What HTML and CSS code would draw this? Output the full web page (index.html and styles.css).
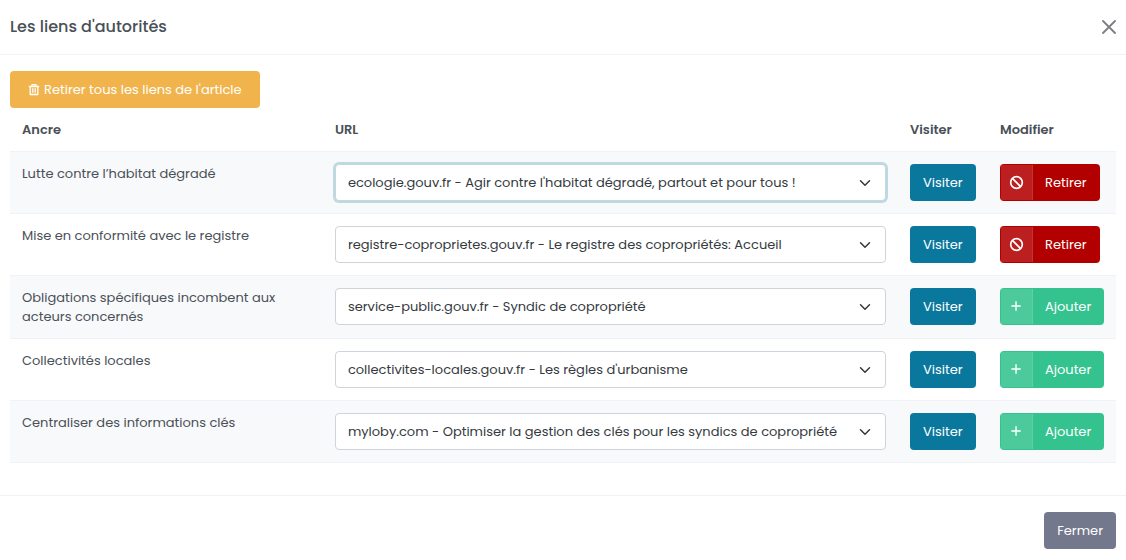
FILE: index.html
```html
<!DOCTYPE html>
<html lang="fr">
<head>
  <meta charset="UTF-8">
  <meta name="viewport" content="width=device-width, initial-scale=1.0">
  <title>Les liens d'autorités</title>
  <link rel="stylesheet" href="styles.css">
</head>
<body>
  <svg class="sprite" aria-hidden="true">
    <symbol id="icon-ban" viewBox="0 0 16 16">
      <circle cx="8" cy="8" r="6.2" fill="none" stroke="currentColor" stroke-width="1.8"/>
      <path d="M3.6 3.6l8.8 8.8" fill="none" stroke="currentColor" stroke-width="1.8"/>
    </symbol>
    <symbol id="icon-plus" viewBox="0 0 16 16">
      <path d="M7.5 2.5v10M2.5 7.5h10" fill="none" stroke="currentColor" stroke-width="1.5"/>
    </symbol>
  </svg>

  <div class="modal" role="dialog" aria-labelledby="modal-title">
    <header class="modal-header">
      <h1 class="modal-title" id="modal-title">Les liens d'autorités</h1>
      <button type="button" class="btn-close" aria-label="Fermer la fenêtre">
        <svg viewBox="0 0 14 14"><path d="M1 1l12 12M13 1L1 13" fill="none" stroke="currentColor" stroke-width="1.8" stroke-linecap="round"/></svg>
      </button>
    </header>

    <div class="modal-body">
      <button type="button" class="btn btn-warning">
        <svg class="icon-trash" viewBox="0 0 12 12"><path d="M.8 2.5h10.4M4 2.5V.7h4v1.8M2.2 2.5v8h7.6v-8M4.8 4.2v4.6M7.2 4.2v4.6" fill="none" stroke="currentColor" stroke-width="1.3" stroke-linejoin="round"/></svg>
        Retirer tous les liens de l'article
      </button>

      <table class="table">
        <colgroup>
          <col>
          <col class="col-url">
          <col class="col-visit">
          <col class="col-edit">
        </colgroup>
        <thead>
          <tr>
            <th scope="col">Ancre</th>
            <th scope="col">URL</th>
            <th scope="col">Visiter</th>
            <th scope="col">Modifier</th>
          </tr>
        </thead>
        <tbody>
          <tr>
            <td><label for="url-1">Lutte contre l’habitat dégradé</label></td>
            <td>
              <select class="form-select is-active" id="url-1">
                <option>ecologie.gouv.fr - Agir contre l'habitat dégradé, partout et pour tous !</option>
              </select>
            </td>
            <td><a class="btn btn-info" href="#">Visiter</a></td>
            <td><button type="button" class="btn btn-label btn-danger"><span class="label-icon"><svg><use href="#icon-ban"/></svg></span>Retirer</button></td>
          </tr>
          <tr>
            <td><label for="url-2">Mise en conformité avec le registre</label></td>
            <td>
              <select class="form-select" id="url-2">
                <option>registre-coproprietes.gouv.fr - Le registre des copropriétés: Accueil</option>
              </select>
            </td>
            <td><a class="btn btn-info" href="#">Visiter</a></td>
            <td><button type="button" class="btn btn-label btn-danger"><span class="label-icon"><svg><use href="#icon-ban"/></svg></span>Retirer</button></td>
          </tr>
          <tr>
            <td><label for="url-3">Obligations spécifiques incombent aux acteurs concernés</label></td>
            <td>
              <select class="form-select" id="url-3">
                <option>service-public.gouv.fr - Syndic de copropriété</option>
              </select>
            </td>
            <td><a class="btn btn-info" href="#">Visiter</a></td>
            <td><button type="button" class="btn btn-label btn-success"><span class="label-icon"><svg><use href="#icon-plus"/></svg></span>Ajouter</button></td>
          </tr>
          <tr>
            <td><label for="url-4">Collectivités locales</label></td>
            <td>
              <select class="form-select" id="url-4">
                <option>collectivites-locales.gouv.fr - Les règles d'urbanisme</option>
              </select>
            </td>
            <td><a class="btn btn-info" href="#">Visiter</a></td>
            <td><button type="button" class="btn btn-label btn-success"><span class="label-icon"><svg><use href="#icon-plus"/></svg></span>Ajouter</button></td>
          </tr>
          <tr>
            <td><label for="url-5">Centraliser des informations clés</label></td>
            <td>
              <select class="form-select" id="url-5">
                <option>myloby.com - Optimiser la gestion des clés pour les syndics de copropriété</option>
              </select>
            </td>
            <td><a class="btn btn-info" href="#">Visiter</a></td>
            <td><button type="button" class="btn btn-label btn-success"><span class="label-icon"><svg><use href="#icon-plus"/></svg></span>Ajouter</button></td>
          </tr>
        </tbody>
      </table>
    </div>

    <footer class="modal-footer">
      <button type="button" class="btn btn-secondary">Fermer</button>
    </footer>
  </div>
</body>
</html>
```
FILE: styles.css
```css
* { box-sizing: border-box; }

body {
  margin: 0;
  background: #fff;
  color: #495057;
  font-family: Poppins, Inter, "Open Sans", sans-serif;
  font-size: 13px;
  line-height: 19px;
}

.sprite { display: none; }

/* modal */
.modal-header {
  display: flex;
  align-items: center;
  justify-content: space-between;
  padding: 15px 10px;
  border-bottom: 1px solid #eff2f7;
}
.modal-title {
  margin: 0;
  font-size: 16px;
  font-weight: 500;
  line-height: 24px;
}
.btn-close {
  display: flex;
  padding: 0;
  border: 0;
  background: none;
  color: #7c7e82;
}
.btn-close svg { width: 14px; height: 14px; }
.modal-body { padding: 16px 10px; }
.modal-footer {
  display: flex;
  justify-content: flex-end;
  padding: 16px 10px 12px;
  border-top: 1px solid #eff2f7;
}

/* buttons */
.btn {
  display: inline-flex;
  align-items: center;
  justify-content: center;
  padding: 8px 12px;
  border: 1px solid transparent;
  border-radius: 4px;
  color: #fff;
  font: inherit;
  text-decoration: none;
  vertical-align: top;
  cursor: pointer;
}
.btn-warning {
  gap: 4px;
  padding: 8px 17px;
  background: #f1b44c;
}
.icon-trash { width: 12px; height: 12px; }
.btn-info { background: #0a789d; }
.btn-secondary { background: #74788d; }
.btn-danger { background: #b20000; }
.btn-success { background: #34c38f; }

.btn-label {
  align-items: stretch;
  gap: 12px;
  padding: 0 12px 0 0;
  line-height: 35px;
}
.label-icon {
  display: flex;
  align-items: center;
  justify-content: center;
  width: 32px;
  border-right: 1px solid rgba(255, 255, 255, .1);
  background: rgba(255, 255, 255, .12);
}
.label-icon svg { width: 15px; height: 15px; }

/* table */
.table {
  width: 100%;
  margin-bottom: 16px;
  border-collapse: separate;
  border-spacing: 0;
  table-layout: fixed;
}
.col-url { width: 52%; }
.col-visit { width: 90px; }
.col-edit { width: 128px; }
.table th,
.table td {
  padding: 12px;
  text-align: left;
  vertical-align: top;
}
.table th { font-weight: 600; }
.table tbody td { border-top: 1px solid #eff2f7; }
.table tbody tr:last-child td { border-bottom: 1px solid #eff2f7; }
.table tbody tr:nth-child(odd) { background: #f8f9fb; }
.table label { display: block; }

.form-select {
  display: block;
  width: 100%;
  height: 37px;
  padding: 0 36px 0 12px;
  border: 1px solid #ced4da;
  border-radius: 4px;
  appearance: none;
  background: #fff url("data:image/svg+xml,%3Csvg xmlns='http://www.w3.org/2000/svg' viewBox='0 0 16 16'%3E%3Cpath fill='none' stroke='%23343a40' stroke-linecap='round' stroke-linejoin='round' stroke-width='2' d='m2 5 6 6 6-6'/%3E%3C/svg%3E") no-repeat right 14px center / 12px 12px;
  color: #343a40;
  font: inherit;
  outline: 0;
}
.form-select.is-active,
.form-select:focus {
  border-color: #c9d6d8;
  box-shadow: 0 0 0 2px #bbdae3;
}
```
